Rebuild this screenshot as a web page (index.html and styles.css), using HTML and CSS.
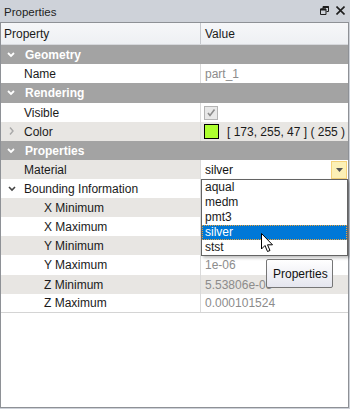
FILE: index.html
```html
<!DOCTYPE html>
<html lang="en">
<head>
    <meta charset="UTF-8">
    <title>Properties</title>
    <link rel="stylesheet" href="styles.css">
</head>
<body>
    <!-- Barra de título -->
    <div class="titlebar">
        <span class="title">Properties</span>
        <div class="tools">
            <svg width="9" height="9" viewBox="0 0 9 9">
                <path d="M3 0.5 H8.5 V5.5 H6.5 M0.5 3 H6 V8.5 H0.5 Z M3 0.5 V3" fill="none" stroke="#1e1e1e" stroke-width="1"/>
                <path d="M3 1 H8.5" stroke="#1e1e1e" stroke-width="2"/>
                <path d="M0.5 3.5 H6" stroke="#1e1e1e" stroke-width="2"/>
            </svg>
            <svg width="9" height="9" viewBox="0 0 9 9">
                <path d="M0.5 0.5 L8.5 8.5 M8.5 0.5 L0.5 8.5" stroke="#1e1e1e" stroke-width="1.6"/>
            </svg>
        </div>
    </div>

    <!-- Grade de propriedades -->
    <div class="panel">
        <div class="head">
            <div class="c1">Property</div>
            <div class="c2">Value</div>
        </div>

        <div class="cat">
            <svg class="chev" width="8" height="6" viewBox="0 0 8 6"><path d="M1 1 L4 4 L7 1" fill="none" stroke="#fff" stroke-width="1.8"/></svg>
            Geometry
        </div>
        <div class="row">
            <div class="name l1">Name</div>
            <div class="val dim">part_1</div>
        </div>

        <div class="cat tall">
            <svg class="chev" width="8" height="6" viewBox="0 0 8 6"><path d="M1 1 L4 4 L7 1" fill="none" stroke="#fff" stroke-width="1.8"/></svg>
            Rendering
        </div>
        <div class="row">
            <div class="name l1">Visible</div>
            <div class="val"><span class="check">
                <svg width="10" height="10" viewBox="0 0 10 10"><path d="M2 5 L4 7.5 L8.5 1.5" fill="none" stroke="#8c8c8c" stroke-width="1.6"/></svg>
            </span></div>
        </div>
        <div class="row alt">
            <div class="name l1">
                <svg class="arrow" width="5" height="8" viewBox="0 0 5 8"><path d="M1 0.5 L4 4 L1 7.5" fill="none" stroke="#a8a8a8" stroke-width="1.4"/></svg>
                Color
            </div>
            <div class="val"><span class="swatch"></span>[ 173, 255, 47 ] ( 255 )</div>
        </div>

        <div class="cat">
            <svg class="chev" width="8" height="6" viewBox="0 0 8 6"><path d="M1 1 L4 4 L7 1" fill="none" stroke="#fff" stroke-width="1.8"/></svg>
            Properties
        </div>
        <div class="row alt">
            <div class="name l1">Material</div>
            <div class="val combo">
                silver
                <span class="drop">
                    <svg width="7" height="4" viewBox="0 0 7 4"><path d="M0 0 H7 L3.5 4 Z" fill="#555"/></svg>
                </span>
                <ul class="list">
                    <li>aqual</li>
                    <li>medm</li>
                    <li>pmt3</li>
                    <li class="sel">silver</li>
                    <li>stst</li>
                </ul>
            </div>
        </div>
        <div class="row">
            <div class="name l1">
                <svg class="chev dark" width="8" height="6" viewBox="0 0 8 6"><path d="M1 1 L4 4 L7 1" fill="none" stroke="#444" stroke-width="1.6"/></svg>
                Bounding Information
            </div>
            <div class="val"></div>
        </div>
        <div class="row alt">
            <div class="name l2">X Minimum</div>
            <div class="val dim"></div>
        </div>
        <div class="row">
            <div class="name l2">X Maximum</div>
            <div class="val dim"></div>
        </div>
        <div class="row alt">
            <div class="name l2">Y Minimum</div>
            <div class="val dim"></div>
        </div>
        <div class="row tall">
            <div class="name l2">Y Maximum</div>
            <div class="val dim">1e-06</div>
        </div>
        <div class="row alt">
            <div class="name l2">Z Minimum</div>
            <div class="val dim">5.53806e-05</div>
        </div>
        <div class="row last">
            <div class="name l2">Z Maximum</div>
            <div class="val dim">0.000101524</div>
        </div>

        <!-- Cursor e dica -->
        <svg class="cursor" width="13" height="20" viewBox="0 0 13 20">
            <path d="M0.5 0.5 V16 L4 12.5 L6.5 18.5 L9 17.5 L6.5 11.8 H11.5 Z" fill="#fff" stroke="#000" stroke-width="1"/>
        </svg>
        <div class="tip">Properties</div>
    </div>
</body>
</html>
```
FILE: styles.css
```css
/* Reset básico */
* {
    margin: 0;
    padding: 0;
    box-sizing: border-box;
}

body {
    font-family: "Liberation Sans", Arial, sans-serif;
    font-size: 12px;
    color: #1a1a1a;
    background-color: #ced2d9;
    width: 350px;
    height: 409px;
    overflow: hidden;
}

/* Barra de título */
.titlebar {
    height: 22px;
    display: flex;
    align-items: center;
    justify-content: space-between;
    padding: 1px 5px 0 4px;
}

.titlebar .title {
    font-size: 11.5px;
    color: #222;
}

.titlebar .tools {
    display: flex;
    gap: 7px;
    margin-top: -2px;
}

/* Painel */
.panel {
    position: relative;
    width: 349px;
    height: 386px;
    background-color: #ffffff;
    border: 1px solid #8e9196;
}

.head {
    display: grid;
    grid-template-columns: 200px 1fr;
    height: 22px;
    background: linear-gradient(#f6f7f9, #eef0f3);
    border-bottom: 1px solid #d6d8dc;
}

.head div {
    display: flex;
    align-items: center;
    padding-left: 3px;
}

.head .c1 {
    border-right: 1px solid #c5c8cd;
}

.head .c2 {
    padding-left: 4px;
}

.cat {
    display: flex;
    align-items: center;
    height: 19px;
    background-color: #a3a3a3;
    color: #ffffff;
    font-weight: bold;
    padding-left: 24px;
    position: relative;
}

.chev {
    position: absolute;
    left: 6px;
    top: 7px;
}

.row {
    display: grid;
    grid-template-columns: 200px 1fr;
    height: 19px;
    background-color: #ffffff;
}

.row.alt {
    background-color: #e8e6e3;
}

.tall {
    height: 20px;
}

.row.last {
    border-bottom: 1px solid #d4d4d4;
    height: 19px;
}

.name {
    display: flex;
    align-items: center;
    position: relative;
    border-right: 1px solid #dadada;
    white-space: nowrap;
}

.l1 {
    padding-left: 23px;
}

.l2 {
    padding-left: 43px;
}

.name .arrow {
    position: absolute;
    left: 8px;
    top: 5px;
}

.name .chev.dark {
    left: 7px;
    top: 7px;
}

.val {
    display: flex;
    align-items: center;
    padding-left: 4px;
    position: relative;
    white-space: nowrap;
}

.dim {
    color: #8c8c8c;
}

.check {
    display: flex;
    align-items: center;
    justify-content: center;
    width: 14px;
    height: 14px;
    margin-left: -1px;
    border: 1px solid #b4b4b4;
    background-color: #e8e8e8;
}

.swatch {
    width: 15px;
    height: 15px;
    margin-left: -1px;
    margin-right: 8px;
    border: 1px solid #000;
    background-color: #adff2f;
}

/* Combo de material */
.combo {
    background-color: #ffffff;
    color: #111;
}

.drop {
    position: absolute;
    right: 1px;
    top: 1px;
    width: 16px;
    height: 18px;
    display: flex;
    align-items: center;
    justify-content: center;
    background-color: #fcf0b6;
    border: 1px solid #f4d27a;
}

.list {
    list-style: none;
    position: absolute;
    left: 0;
    top: 19px;
    width: 147px;
    height: 77px;
    background-color: #ffffff;
    border: 1px solid #646464;
    box-shadow: 2px 2px 3px rgba(0, 0, 0, 0.25);
    z-index: 2;
}

.list li {
    height: 15px;
    line-height: 15px;
    padding-left: 3px;
    color: #1a1a1a;
}

.list li.sel {
    background-color: #0078d7;
    color: #ffffff;
    outline: 1px dotted #e9a23b;
    outline-offset: -1px;
}

/* Cursor e dica */
.cursor {
    position: absolute;
    left: 260px;
    top: 210px;
    z-index: 4;
}

.tip {
    position: absolute;
    left: 265px;
    top: 236px;
    width: 67px;
    height: 29px;
    display: flex;
    align-items: center;
    padding-left: 6px;
    background: linear-gradient(#ffffff, #e5e6ef);
    border: 1px solid #767676;
    border-radius: 2px;
    color: #111;
    z-index: 3;
}
```
